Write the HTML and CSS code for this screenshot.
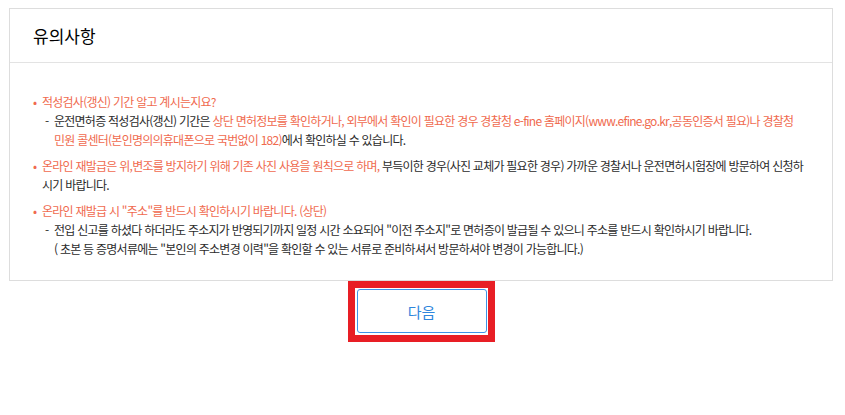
FILE: index.html
```html
<!DOCTYPE html>
<html lang="ko">

<head>
    <meta charset="utf-8">
    <title>유의사항</title>
    <link rel="stylesheet" href="styles.css">
</head>

<body>
    <div class="notice">
        <div class="notice-head">
            <h2>유의사항</h2>
        </div>
        <ul class="notice-list">
            <li>
                <p class="point">적성검사(갱신) 기간 알고 계시는지요?</p>
                <p class="sub">운전면허증 적성검사(갱신) 기간은 <span class="point">상단 면허정보를 확인하거나, 외부에서 확인이 필요한 경우 경찰청 e-fine 홈페이지(www.efine.go.kr,공동인증서 필요)나 경찰청 민원 콜센터(본인명의의휴대폰으로 국번없이 182)</span>에서 확인하실 수 있습니다.</p>
            </li>
            <li>
                <p><span class="point">온라인 재발급은 위,변조를 방지하기 위해 기존 사진 사용을 원칙으로 하며,</span> 부득이한 경우(사진 교체가 필요한 경우) 가까운 경찰서나 운전면허시험장에 방문하여 신청하시기 바랍니다.</p>
            </li>
            <li>
                <p class="point">온라인 재발급 시 "주소"를 반드시 확인하시기 바랍니다. (상단)</p>
                <p class="sub">전입 신고를 하셨다 하더라도 주소지가 반영되기까지 일정 시간 소요되어 "이전 주소지"로 면허증이 발급될 수 있으니 주소를 반드시 확인하시기 바랍니다.<br>( 초본 등 증명서류에는 "본인의 주소변경 이력"을 확인할 수 있는 서류로 준비하셔서 방문하셔야 변경이 가능합니다.)</p>
            </li>
        </ul>
    </div>

    <div class="btn-area">
        <div class="btn-mark">
            <button class="btn-next">다음</button>
        </div>
    </div>
</body>

</html>
```

FILE: styles.css
```css
body {
    font-family: "Noto Sans CJK KR", "Noto Sans", sans-serif;
    margin: 0;
    padding: 8px 12px 0 9px;
    color: #333;
    background-color: #fff;
}

.notice {
    border: 1px solid #ddd;
}

.notice-head {
    height: 53px;
    border-bottom: 1px solid #e3e3e3;
    padding: 0 23px;
    display: flex;
    align-items: center;
}

.notice-head h2 {
    margin: 0;
    font-size: 17px;
    font-weight: normal;
    color: #000;
}

.notice-list {
    list-style: none;
    margin: 0;
    padding: 29px 24px 22px 23px;
    font-size: 12px;
    line-height: 19px;
    letter-spacing: -0.75px;
    color: #2b2b2b;
}

.notice-list li {
    position: relative;
    padding-left: 9px;
    margin-top: 7px;
}

.notice-list li:first-child {
    margin-top: 0;
}

/* bullet dot */
.notice-list li::before {
    content: "•";
    position: absolute;
    left: 0;
    top: 0;
    color: #f06a4e;
}

.notice-list p {
    margin: 0;
}

.point {
    color: #f06a4e;
}

.sub {
    position: relative;
    padding-left: 12px;
    word-break: keep-all;
}

.sub::before {
    content: "-";
    position: absolute;
    left: 3px;
    top: 0;
    color: #333;
}

.btn-area {
    display: flex;
    justify-content: center;
}

.btn-mark {
    border: 7px solid #e81e25;
    padding: 1px 1px 2px 2px;
}

.btn-next {
    display: block;
    width: 130px;
    height: 44px;
    background: #fff;
    border: 1px solid #3d93e8;
    border-radius: 3px;
    color: #2f86dc;
    font-family: "Noto Sans CJK KR", sans-serif;
    font-size: 15px;
    cursor: pointer;
}
```
